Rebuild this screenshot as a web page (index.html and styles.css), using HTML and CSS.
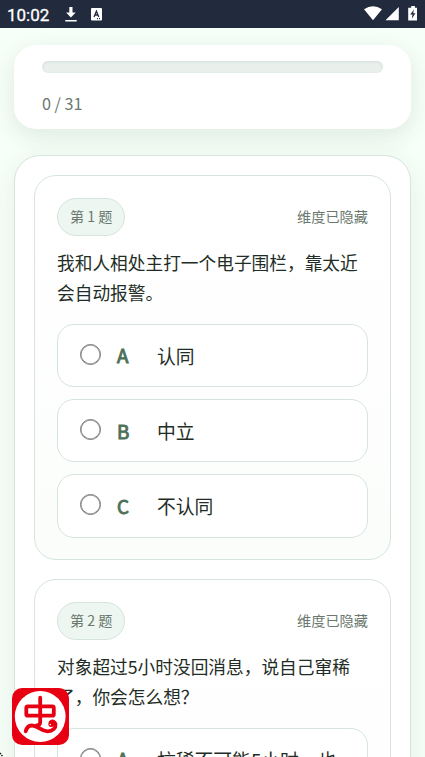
FILE: index.html
```
<!DOCTYPE html>
<html lang="zh-CN">
<head>
<meta charset="utf-8">
<meta name="viewport" content="width=device-width, initial-scale=1">
<title>测试</title>
<link rel="stylesheet" href="styles.css">
</head>
<body>
<header class="status">
  <span class="clock">10:02</span>
  <svg class="download" width="12" height="17" viewBox="0 0 12 17"><path d="M4.3 1h3.2v5.4h3.2L5.9 11.4 1.1 6.4h3.2zM.3 14h11.4v1.5H.3z" fill="#fff"/></svg>
  <svg class="keyboard" width="11" height="13" viewBox="0 0 11 13"><rect width="11" height="12.5" rx="1" fill="#fff"/><path d="M3 9 5.4 3.3 7.8 9M4 7h3M6 10.7h1M8 10.7h1" fill="none" stroke="#222b3e" stroke-width="1.3"/></svg>
  <svg class="system" width="54" height="16" viewBox="0 0 54 16"><path d="M0 3.3Q9-2.7 18 3.3L9 14.2zM34.8 1v13.2H21.5zM45.2 1.8h2V0h3.7v1.8h2.1v12.6h-8.8V1.8z" fill="#fff"/><path d="M49.9 3.5 46.2 8.6h2.3l-.7 4.2 3.6-5.5h-2.2z" fill="#222b3e"/></svg>
</header>
<main class="page">
  <section class="progress">
    <div class="track"></div>
    <div class="count">0 / 31</div>
  </section>
  <section class="panel">
    <article class="question">
      <div class="meta"><span class="badge">第 1 题</span><span class="dimension">维度已隐藏</span></div>
      <p class="title">我和人相处主打一个电子围栏，靠太近会自动报警。</p>
      <div class="options">
        <label class="option"><i class="radio"></i><b class="letter">A</b><span class="answer">认同</span></label>
        <label class="option"><i class="radio"></i><b class="letter">B</b><span class="answer">中立</span></label>
        <label class="option"><i class="radio"></i><b class="letter">C</b><span class="answer">不认同</span></label>
      </div>
    </article>
    <article class="question">
      <div class="meta"><span class="badge">第 2 题</span><span class="dimension">维度已隐藏</span></div>
      <p class="title">对象超过5小时没回消息，说自己窜稀了，你会怎么想？</p>
      <div class="options">
        <label class="option"><i class="radio"></i><b class="letter">A</b><span class="answer">抗稀不可能5小时，也</span></label>
      </div>
    </article>
  </section>
</main>
<svg class="logo" width="57" height="57" viewBox="0 0 57 57">
  <rect width="57" height="57" rx="10" fill="#e60012"/>
  <circle cx="28.2" cy="28.5" r="25.4" fill="#fff"/>
  <g fill="none" stroke="#e60012" stroke-width="3.8" stroke-linecap="round" stroke-linejoin="round">
    <rect x="14.3" y="18.3" width="27.5" height="9.4" rx="1.5"/>
    <path d="M28.2 9.7v24.500q0 3-3.500 3.200"/>
    <path d="M13.700 43.300C15 38.500 18 36.800 22 37.800 28 39.300 29.500 43.300 35.500 43.300 41 43.300 43.800 40 43.500 36.500 43.200 33.500 40.500 32.700 38.800 34.200"/>
  </g>
  <circle cx="39.300" cy="36" r="3" fill="#e60012"/><circle cx="38.300" cy="36.500" r=".8" fill="#fff"/>
</svg>
<svg class="corner" width="4" height="5" viewBox="0 0 4 5"><path d="M0 1l3 4" stroke="#111" stroke-width="1.300" stroke-dasharray="1.500 1"/></svg>
</body>
</html>
```
FILE: styles.css
```
* { box-sizing: border-box; }
html, body { height: 757px; overflow: hidden; }
body {
  display: flex;
  flex-direction: column;
  margin: 0;
  font-family: "Noto Sans CJK SC", sans-serif;
  color: #1f2d26;
  background: #f6fff8;
}
.status {
  display: flex;
  flex: none;
  align-items: center;
  height: 28px;
  padding: 0 7px 0 7px;
  background: #222b3e;
}
.clock {
  width: 58px;
  padding-top: 1px;
  font: 400 17px/28px Roboto, sans-serif;
  color: #fff;
  -webkit-text-stroke: .3px #fff;
}
.download { margin-top: 1px; }
.keyboard { margin-left: 14px; }
.system { margin-left: auto; }
.page { flex: 1; min-height: 0; padding: 16.5px 14px 0; overflow: hidden; }
.progress {
  height: 84px;
  padding: 16.500px 28px 0;
  border-radius: 22px;
  background: #fff;
  box-shadow: 0 7px 24px rgba(50, 70, 55, .12);
}
.track {
  height: 12px;
  border-radius: 6px;
  background: #eaf1ed;
  box-shadow: inset 0 1px 3px rgba(60, 80, 70, .12);
}
.count { margin-top: 17.500px; font-size: 16.200px; line-height: 24px; color: #6a786f; }
.panel {
  height: 900px;
  margin-top: 26.500px;
  padding: 19px;
  border: 1px solid #d6e5dc;
  border-radius: 26px;
  background: #fff;
  box-shadow: 0 8px 30px rgba(55, 80, 60, .09);
}
.question {
  height: 385px;
  margin-bottom: 19px;
  padding: 22px;
  border: 1px solid #d6e5dc;
  border-radius: 22px;
  background: linear-gradient(180deg, #fff, #fbfdfb);
}
.meta { display: flex; align-items: center; justify-content: space-between; height: 38px; }
.badge {
  height: 38px;
  padding: 0 12px;
  border: 1px solid #d6e5dc;
  border-radius: 19px;
  background: #edf6f0;
  font-size: 14.1px;
  line-height: 35px;
  color: #6a786f;
}
.dimension { margin-top: -2px; font-size: 14.200px; color: #6a786f; }
.title { margin: 10.500px 0 0; font-size: 17.700px; line-height: 30px; }
.options { display: grid; gap: 12px; margin-top: 17.500px; }
.option {
  display: flex;
  align-items: center;
  height: 63.200px;
  padding-left: 21.500px;
  border: 1px solid #d6e5dc;
  border-radius: 17px;
  background: #fff;
}
.radio {
  width: 21px;
  height: 21px;
  margin-bottom: 2px;
  border: 1px solid #767676;
  border-radius: 50%;
  box-shadow: inset 0 0 0 .5px #767676;
}
.letter {
  width: 40px;
  margin: -1.500px 0 0 16.500px;
  font-size: 18.800px;
  font-weight: 400;
  color: #4d7056;
  -webkit-text-stroke: .9px #4d7056;
}
.answer { font-size: 18.800px; white-space: nowrap; }
.logo { position: absolute; left: 12px; top: 688px; }
.corner { position: absolute; left: 0; top: 752px; }
```
